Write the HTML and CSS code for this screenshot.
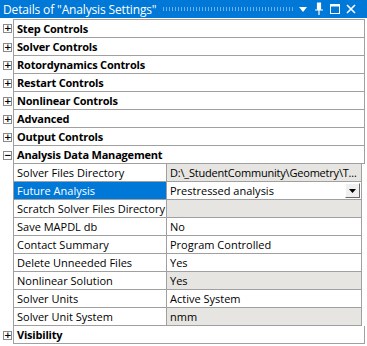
FILE: index.html
```html
<!DOCTYPE html>
<html lang="en">

<head>
    <meta charset="UTF-8">
    <meta name="viewport" content="width=device-width, initial-scale=1.0">
    <link rel="stylesheet" href="styles.css">
    <title>Details of "Analysis Settings"</title>
</head>

<body>
    <div class="panel">
        <div class="titlebar">
            <span class="title">Details of "Analysis Settings"</span>
            <span class="grip"></span>
            <span class="tb-icons">
                <svg width="12" height="12" viewBox="0 0 12 12"><path d="M2 4h8l-4 5z" fill="#fff"/></svg>
                <svg width="12" height="14" viewBox="0 0 12 14"><path d="M4 1h4M4.5 1v7M7.5 1v7M2 8h8M6 8v5" stroke="#fff" stroke-width="1.2" fill="none"/><rect x="4.5" y="1" width="3" height="7" fill="#fff"/></svg>
                <svg width="12" height="12" viewBox="0 0 12 12"><rect x="1.5" y="1.5" width="9" height="9" stroke="#fff" stroke-width="1" fill="none"/><path d="M1.5 2.5h9" stroke="#fff" stroke-width="2"/></svg>
                <svg width="12" height="12" viewBox="0 0 12 12"><path d="M2 2l8 8M10 2l-8 8" stroke="#fff" stroke-width="1.6"/></svg>
            </span>
        </div>

        <div class="tree">
            <div class="row">
                <span class="toggle">+</span>
                <div class="cells group">Step Controls</div>
            </div>
            <div class="row">
                <span class="toggle">+</span>
                <div class="cells group">Solver Controls</div>
            </div>
            <div class="row">
                <span class="toggle">+</span>
                <div class="cells group">Rotordynamics Controls</div>
            </div>
            <div class="row">
                <span class="toggle">+</span>
                <div class="cells group">Restart Controls</div>
            </div>
            <div class="row">
                <span class="toggle">+</span>
                <div class="cells group">Nonlinear Controls</div>
            </div>
            <div class="row">
                <span class="toggle">+</span>
                <div class="cells group">Advanced</div>
            </div>
            <div class="row">
                <span class="toggle">+</span>
                <div class="cells group">Output Controls</div>
            </div>
            <div class="row">
                <span class="toggle">&minus;</span>
                <div class="cells group">Analysis Data Management</div>
            </div>
            <div class="row">
                <span class="gutter"></span>
                <div class="cells">
                    <span class="name">Solver Files Directory</span>
                    <span class="value readonly path">D:\_StudentCommunity\Geometry\T...</span>
                </div>
            </div>
            <div class="row">
                <span class="gutter"></span>
                <div class="cells">
                    <span class="name selected">Future Analysis</span>
                    <span class="value combo">Prestressed analysis
                        <span class="drop"><svg width="7" height="4" viewBox="0 0 7 4"><path d="M0 0h7l-3.5 4z" fill="#000"/></svg></span>
                    </span>
                </div>
            </div>
            <div class="row">
                <span class="gutter"></span>
                <div class="cells">
                    <span class="name">Scratch Solver Files Directory</span>
                    <span class="value readonly"></span>
                </div>
            </div>
            <div class="row">
                <span class="gutter"></span>
                <div class="cells">
                    <span class="name">Save MAPDL db</span>
                    <span class="value">No</span>
                </div>
            </div>
            <div class="row">
                <span class="gutter"></span>
                <div class="cells">
                    <span class="name">Contact Summary</span>
                    <span class="value">Program Controlled</span>
                </div>
            </div>
            <div class="row">
                <span class="gutter"></span>
                <div class="cells">
                    <span class="name">Delete Unneeded Files</span>
                    <span class="value">Yes</span>
                </div>
            </div>
            <div class="row">
                <span class="gutter"></span>
                <div class="cells">
                    <span class="name">Nonlinear Solution</span>
                    <span class="value readonly">Yes</span>
                </div>
            </div>
            <div class="row">
                <span class="gutter"></span>
                <div class="cells">
                    <span class="name">Solver Units</span>
                    <span class="value">Active System</span>
                </div>
            </div>
            <div class="row">
                <span class="gutter"></span>
                <div class="cells">
                    <span class="name">Solver Unit System</span>
                    <span class="value readonly">nmm</span>
                </div>
            </div>
            <div class="row">
                <span class="toggle">+</span>
                <div class="cells group">Visibility</div>
            </div>
        </div>
    </div>
</body>

</html>
```

FILE: styles.css
```css
body {
  margin: 0;
  background: #ffffff;
}

.panel,
.panel * {
  font-family: "Open Sans", "Noto Sans", sans-serif;
}

.panel {
  width: 367px;
  height: 346px;
  background: #ffffff;
}

.titlebar {
  display: flex;
  align-items: center;
  height: 18px;
  padding-left: 3px;
  background: #0078d7;
  color: #ffffff;
}

.title {
  font-size: 12px;
  letter-spacing: -0.15px;
  white-space: nowrap;
}

.grip {
  flex: 1;
  height: 4px;
  margin: 0 4px 0 6px;
  background-image: radial-gradient(circle, #6fb3ea 0.6px, transparent 0.8px);
  background-size: 3px 2px;
}

.tb-icons {
  display: flex;
  align-items: center;
  gap: 4px;
  padding-right: 10px;
}

.tb-icons svg {
  display: block;
}

.tree {
  margin-top: 1px;
}

.row {
  display: flex;
  height: 18px;
}

.toggle,
.gutter {
  width: 13px;
  flex: none;
}

.toggle {
  box-sizing: border-box;
  width: 9px;
  height: 9px;
  margin: 5px 1px 0 3px;
  border: 1px solid #8a8a8a;
  font-size: 9px;
  line-height: 6px;
  text-align: center;
  font-family: "DejaVu Sans", sans-serif;
  font-weight: bold;
  color: #000000;
}

.cells {
  display: flex;
  width: 347px;
  border-left: 1px solid #a0a0a0;
  border-right: 1px solid #a0a0a0;
  border-bottom: 1px solid #a0a0a0;
  font-size: 11px;
  line-height: 17px;
  color: #000000;
}

.row:first-child .cells {
  border-top: 1px solid #a0a0a0;
}

.row:first-child {
  height: 19px;
}

.group {
  padding-left: 3px;
  font-weight: bold;
  letter-spacing: -0.2px;
}

.name {
  width: 149px;
  flex: none;
  padding-left: 3px;
  border-right: 1px solid #a0a0a0;
  white-space: nowrap;
  overflow: hidden;
}

.name.selected {
  background: #0078d7;
  color: #ffffff;
}

.value {
  flex: 1;
  display: flex;
  align-items: center;
  padding-left: 3px;
  white-space: nowrap;
  overflow: hidden;
}

.value.readonly {
  background: #e6e5e2;
}

.value.path {
  letter-spacing: -0.2px;
}

.combo {
  justify-content: space-between;
}

.drop {
  display: flex;
  align-items: center;
  justify-content: center;
  box-sizing: border-box;
  width: 15px;
  height: 15px;
  margin-right: 1px;
  background: #f0f0f0;
  border: 1px solid #ffffff;
  border-right-color: #696969;
  border-bottom-color: #696969;
}
```
